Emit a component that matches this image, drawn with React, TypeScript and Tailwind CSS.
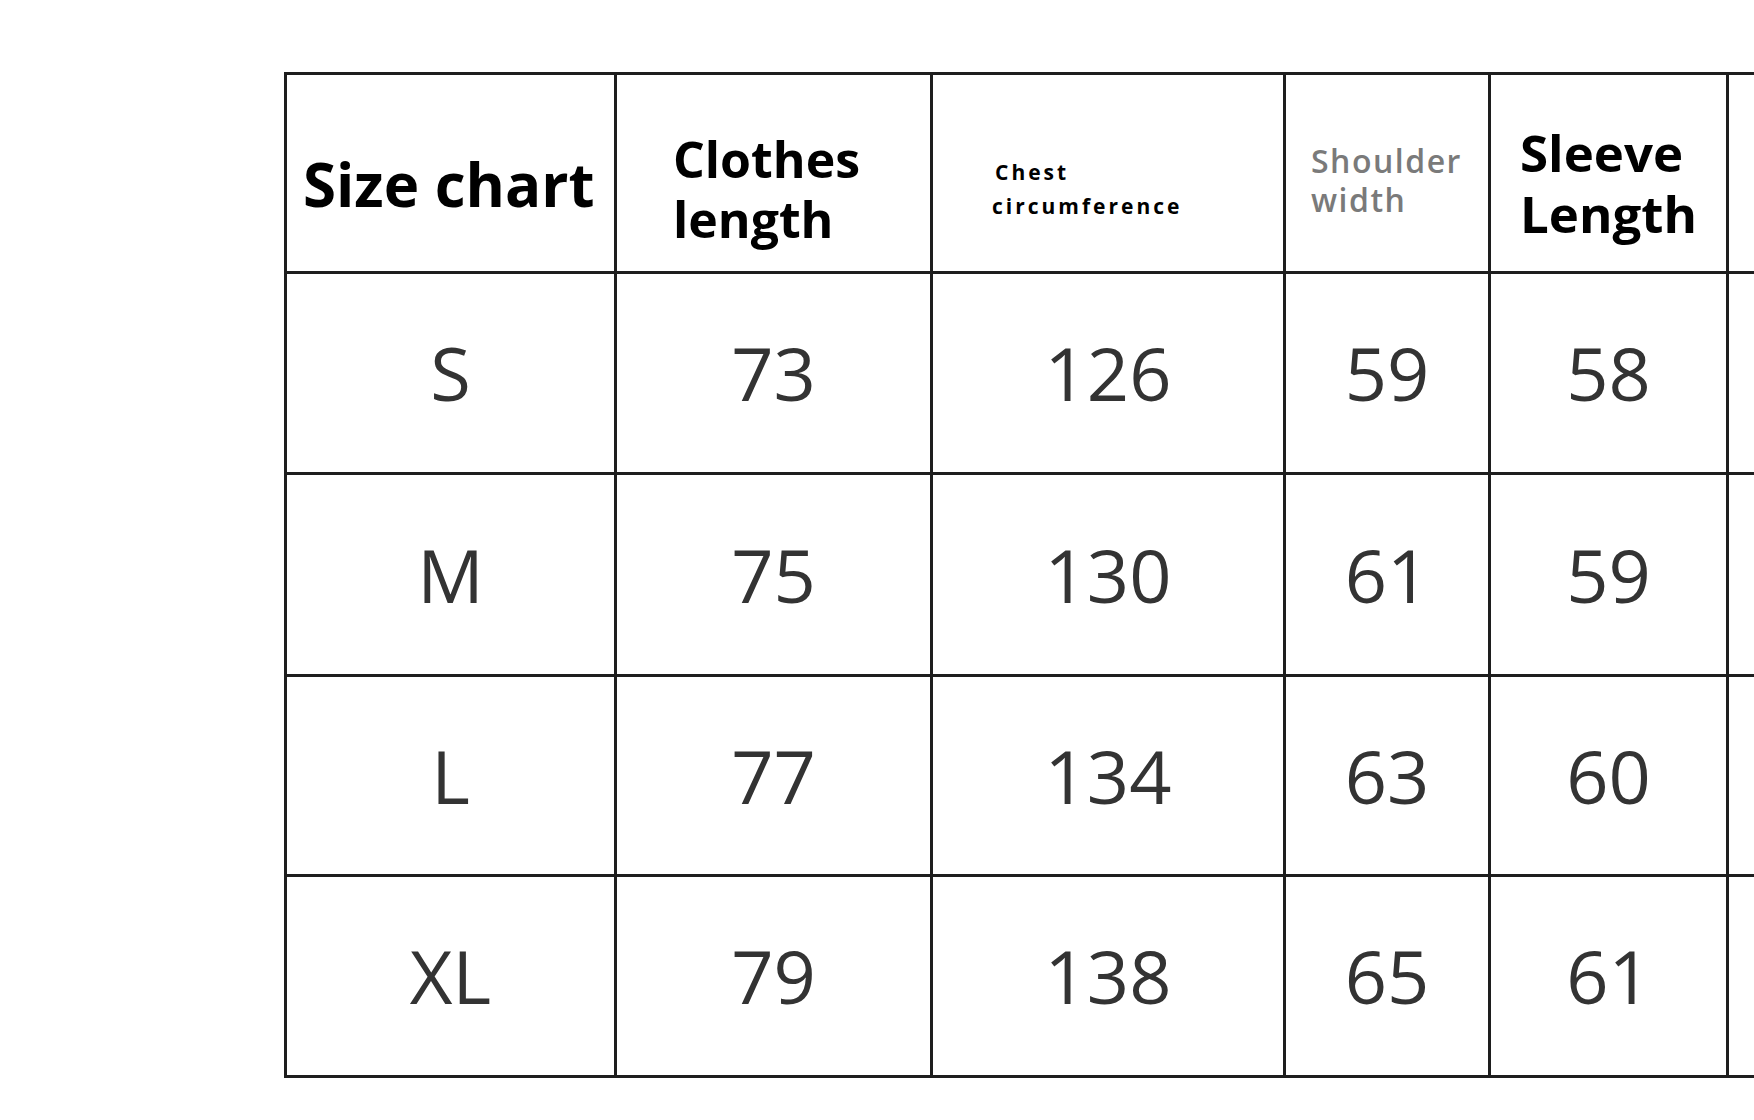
import React from "react";

const rows = [
  { size: "S", h: "h-[201px]", v: ["73", "126", "59", "58"] },
  { size: "M", h: "h-[202px]", v: ["75", "130", "61", "59"] },
  { size: "L", h: "h-[200px]", v: ["77", "134", "63", "60"] },
  { size: "XL", h: "h-[201px]", v: ["79", "138", "65", "61"] },
];

const widths = ["w-[330px]", "w-[316px]", "w-[353px]", "w-[205px]", "w-[238px]", "w-[200px]"];

function Cell({ w, h, children, className = "" }: { w: string; h: string; children?: React.ReactNode; className?: string }) {
  return (
    <div className={`${w} ${h} shrink-0 border-r-[3px] border-b-[3px] border-[#1e1e1e] ${className}`}>
      {children}
    </div>
  );
}

export default function App() {
  return (
    <div className="w-[1754px] h-[1120px] overflow-hidden bg-white" style={{ fontFamily: '"Open Sans", "Noto Sans", sans-serif' }}>
      <div className="ml-[284px] mt-[72px] w-max border-l-[3px] border-t-[3px] border-[#1e1e1e]">
        <div className="flex">
          <Cell w={widths[0]} h="h-[199px]" className="pl-[16px] pt-[79px]">
            <div className="text-[60px] leading-[60px] font-bold text-black whitespace-nowrap">Size chart</div>
          </Cell>
          <Cell w={widths[1]} h="h-[199px]" className="pl-[56px] pt-[54px]">
            <div className="text-[50px] leading-[60px] font-bold text-black">
              Clothes
              <br />
              length
            </div>
          </Cell>
          <Cell w={widths[2]} h="h-[199px]" className="pl-[59px] pt-[80px]">
            <div className="text-[21px] leading-[34px] font-bold tracking-[3px] text-black">
              <span className="pl-[3px]">Chest</span>
              <br />
              circumference
            </div>
          </Cell>
          <Cell w={widths[3]} h="h-[199px]" className="pl-[25px] pt-[66px]">
            <div className="text-[32px] leading-[39px] font-semibold tracking-[1.5px] text-[#7a7a7a]">
              Shoulder
              <br />
              width
            </div>
          </Cell>
          <Cell w={widths[4]} h="h-[199px]" className="pl-[29px] pt-[47px]">
            <div className="text-[51px] leading-[61px] font-bold text-black">
              Sleeve
              <br />
              Length
            </div>
          </Cell>
          <Cell w={widths[5]} h="h-[199px]" />
        </div>
        {rows.map((r) => (
          <div key={r.size} className="flex">
            <Cell w={widths[0]} h={r.h} className="flex items-center justify-center">
              <span className="text-[74px] leading-none text-[#333333]">{r.size}</span>
            </Cell>
            {r.v.map((val, i) => (
              <Cell key={i} w={widths[i + 1]} h={r.h} className="flex items-center justify-center">
                <span className="text-[74px] leading-none text-[#333333]">{val}</span>
              </Cell>
            ))}
            <Cell w={widths[5]} h={r.h} />
          </div>
        ))}
      </div>
    </div>
  );
}
